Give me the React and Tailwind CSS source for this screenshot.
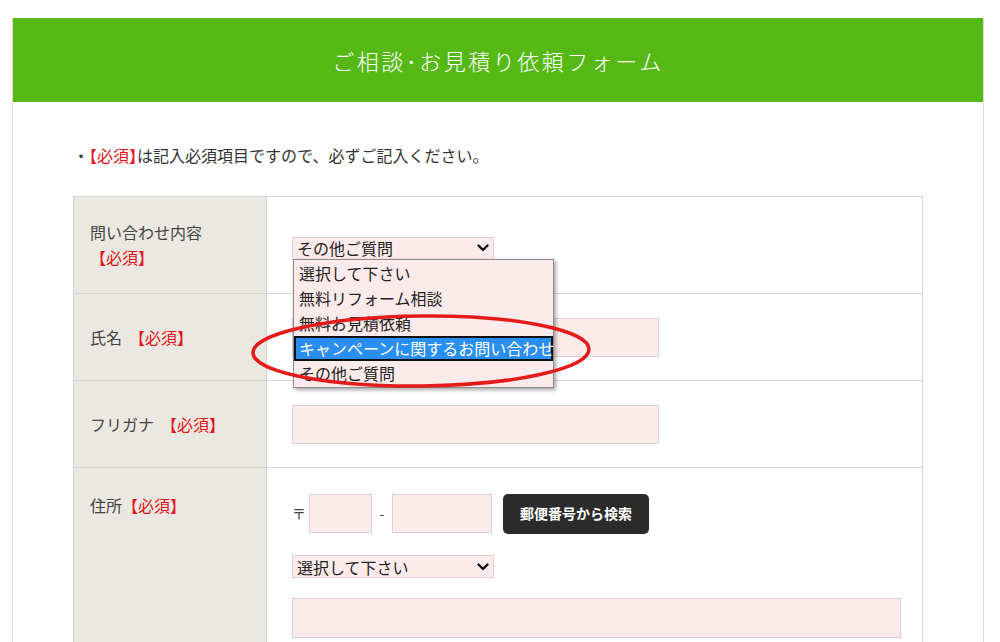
import React from 'react';

const font = { fontFamily: '"Noto Sans CJK JP", "Noto Sans", sans-serif' };

const Req = ({ className = '' }) => <span className={`text-[#e5161c] ${className}`}>【必須】</span>;

const Chevron = () => (
    <svg width="12" height="8" viewBox="0 0 12 8" className="shrink-0">
        <path d="M1.5 1.5 L6 6 L10.5 1.5" fill="none" stroke="#111" strokeWidth="2.4" strokeLinecap="round" strokeLinejoin="round" />
    </svg>
);

const FakeSelect = ({ value }) => (
    <div className="w-[202px] h-[23px] flex items-center justify-between pl-[4px] pr-[4px] bg-[#fdeaea] border border-[#d9d0d0] text-[16px] leading-none text-[#222]">
        <span>{value}</span>
        <Chevron />
    </div>
);

const options = ['選択して下さい', '無料リフォーム相談', '無料お見積依頼', 'キャンペーンに関するお問い合わせ', 'その他ご質問'];

const App = () => {
    return (
        <div className="min-h-screen bg-white pt-[18px] pl-[12px]" style={font}>
            <div className="w-[972px] border-x border-[#dedede]">
                <div className="h-[84px] bg-[#56b815] flex items-center justify-center">
                    <h1 className="text-white text-[22px] font-light tracking-[2.5px]">ご相談･お見積り依頼フォーム</h1>
                </div>

                <div className="px-[60px] pt-[41px] pb-10">
                    <p className="text-[16px] leading-[24px] text-[#333]">
                        ・<span className="text-[#e5161c] [font-feature-settings:'halt']">【必須】</span>は記入必須項目ですので、必ずご記入ください。
                    </p>

                    <div className="mt-[29px] border border-[#d6d6d6] text-[16px] text-[#444]">
                        {/* row 1 */}
                        <div className="grid grid-cols-[193px_1fr] h-[97px] border-b border-[#d6d6d6]">
                            <div className="bg-[#ebe8e1] border-r border-[#d6d6d6] px-[16px] flex flex-col justify-center leading-[25px]">
                                <span>問い合わせ内容</span>
                                <Req />
                            </div>
                            <div className="pl-[25px] flex items-center pt-[6px]">
                                <div className="relative z-10">
                                    <FakeSelect value="その他ご質問" />
                                    <div className="absolute top-[22px] left-[1px] w-[261px] bg-[#fdeaea] border border-[#8a8a8a] shadow-[2px_2px_4px_rgba(0,0,0,0.35)] py-[1px] text-[#222]">
                                        {options.map((o) =>
                                            o.startsWith('キャンペーン') ? (
                                                <div key={o} className="h-[25px] leading-[21px] px-[3px] bg-[#2b8ef2] border-2 border-[#111] text-white whitespace-nowrap">
                                                    {o}
                                                </div>
                                            ) : (
                                                <div key={o} className="h-[25px] leading-[25px] px-[5px] whitespace-nowrap">
                                                    {o}
                                                </div>
                                            )
                                        )}
                                    </div>
                                    <svg className="absolute left-[-42px] top-[76px] pointer-events-none" width="342" height="78" viewBox="0 0 342 78">
                                        <ellipse cx="171" cy="38" rx="168" ry="35" fill="none" stroke="#e31b1b" strokeWidth="3.5" transform="rotate(-0.6 171 38)" />
                                    </svg>
                                </div>
                            </div>
                        </div>

                        {/* row 2 */}
                        <div className="grid grid-cols-[193px_1fr] h-[87px] border-b border-[#d6d6d6]">
                            <div className="bg-[#ebe8e1] border-r border-[#d6d6d6] px-[16px] flex items-center">
                                <span>氏名</span>
                                <Req className="ml-[7px]" />
                            </div>
                            <div className="pl-[25px] flex items-center">
                                <div className="w-[367px] h-[39px] bg-[#fdeaea] border border-[#d9d0d0]" />
                            </div>
                        </div>

                        {/* row 3 */}
                        <div className="grid grid-cols-[193px_1fr] h-[87px] border-b border-[#d6d6d6]">
                            <div className="bg-[#ebe8e1] border-r border-[#d6d6d6] px-[16px] flex items-center">
                                <span>フリガナ</span>
                                <Req className="ml-[7px]" />
                            </div>
                            <div className="pl-[25px] flex items-center">
                                <div className="w-[367px] h-[39px] bg-[#fdeaea] border border-[#d9d0d0]" />
                            </div>
                        </div>

                        {/* row 4 */}
                        <div className="grid grid-cols-[193px_1fr] h-[200px]">
                            <div className="bg-[#ebe8e1] border-r border-[#d6d6d6] px-[16px] pt-[25px] leading-[25px]">
                                <span>住所</span>
                                <Req />
                            </div>
                            <div className="pl-[25px] pt-[25px]">
                                <div className="flex items-center h-[41px] text-[#444]">
                                    <span className="text-[14px] w-[17px]">〒</span>
                                    <div className="w-[63px] h-[39px] bg-[#fdeaea] border border-[#d9d0d0]" />
                                    <span className="text-[14px] w-[20px] text-center">-</span>
                                    <div className="w-[100px] h-[39px] bg-[#fdeaea] border border-[#d9d0d0]" />
                                    <button className="ml-[11px] w-[146px] h-[40px] rounded-[5px] bg-[#2b2b2b] text-white text-[14px] font-bold">
                                        郵便番号から検索
                                    </button>
                                </div>
                                <div className="mt-[21px]">
                                    <FakeSelect value="選択して下さい" />
                                </div>
                                <div className="mt-[20px] w-[609px] h-[40px] bg-[#fdeaea] border border-[#d9d0d0]" />
                            </div>
                        </div>
                    </div>
                </div>
            </div>
        </div>
    );
};

export default App;
